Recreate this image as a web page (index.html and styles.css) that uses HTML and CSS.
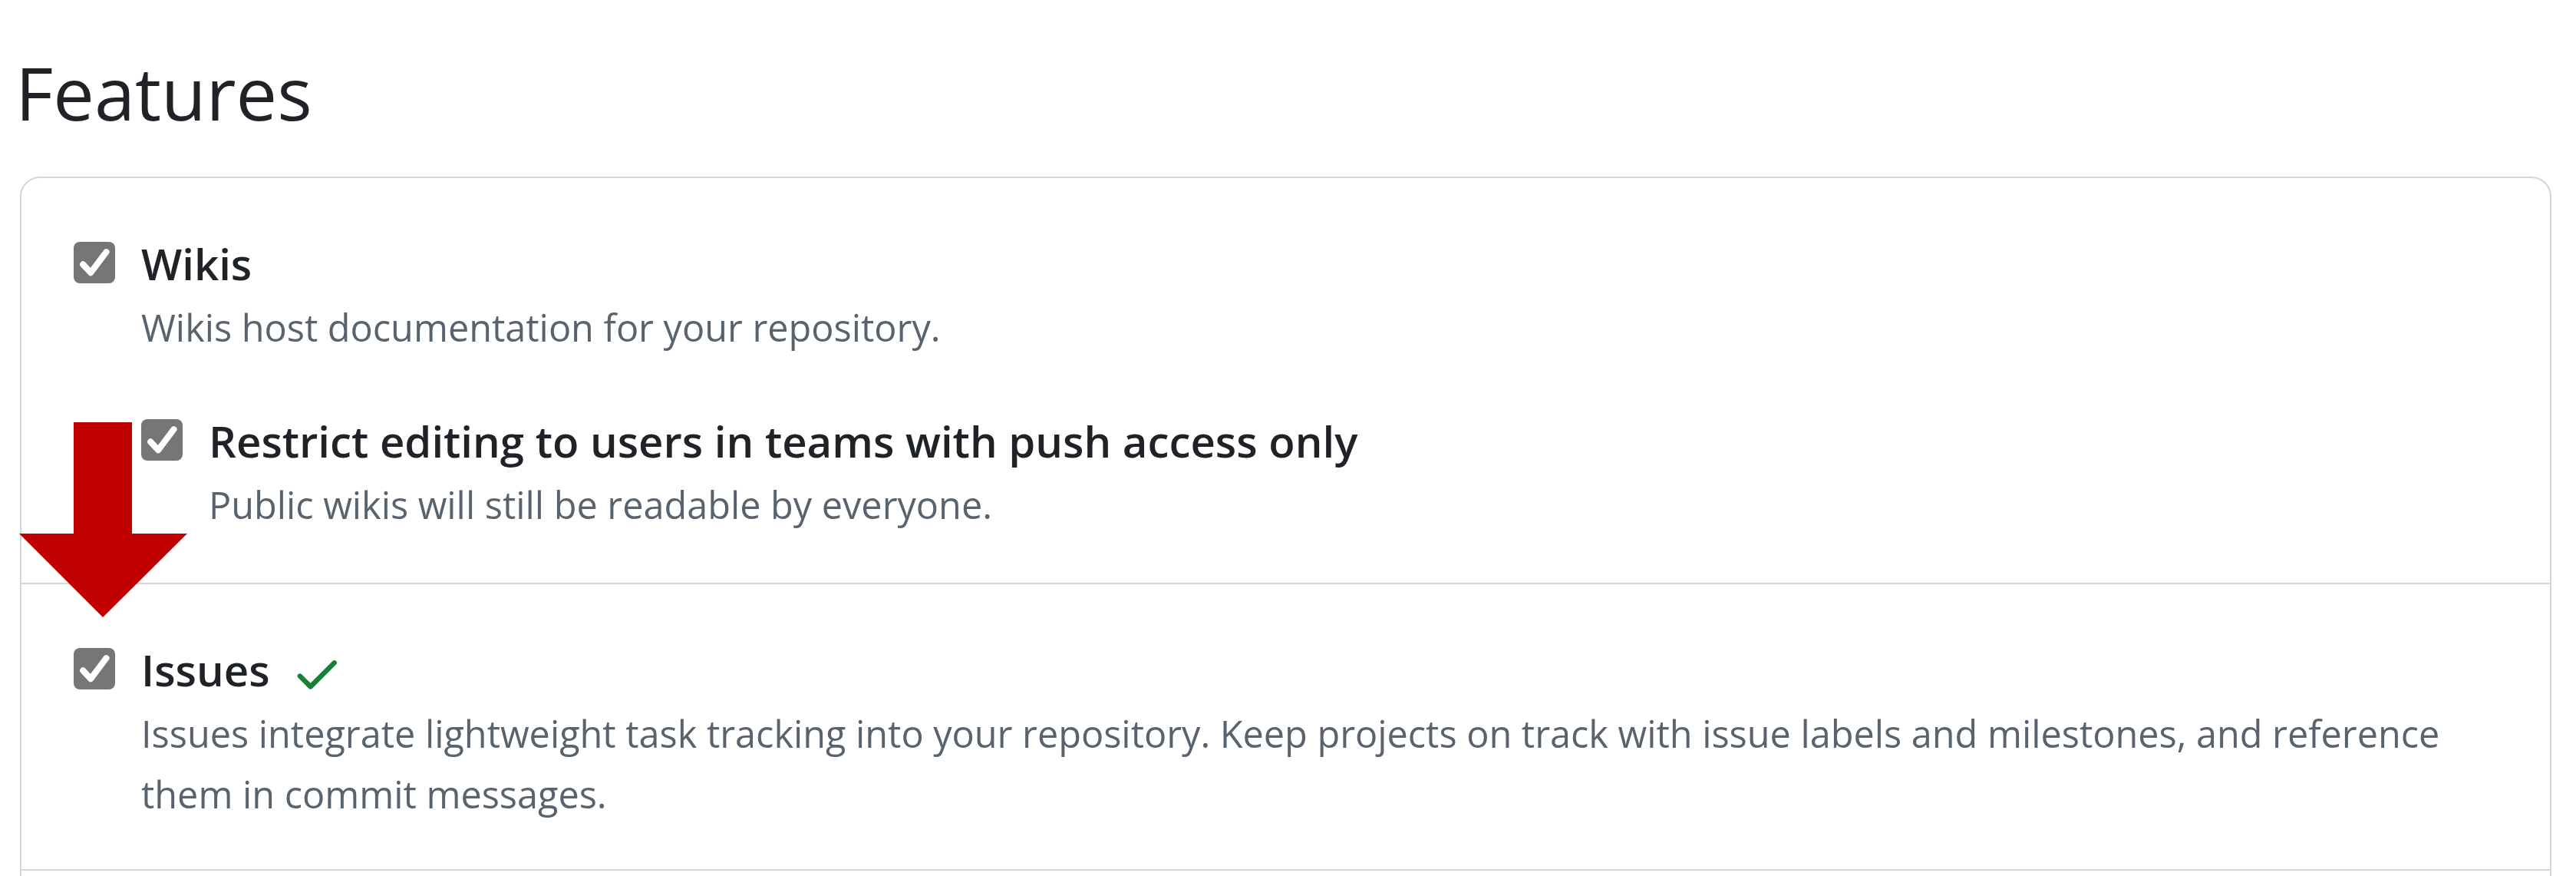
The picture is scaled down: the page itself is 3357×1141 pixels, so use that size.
FILE: index.html
```html
<!DOCTYPE html>
<html lang="en">
<head>
<meta charset="utf-8">
<title>Features</title>
<link rel="stylesheet" href="styles.css">
</head>
<body>
<main class="page">
  <h2 class="heading">Features</h2>
  <div class="box">
    <div class="box-row">
      <div class="check-item">
        <span class="checkbox"><svg viewBox="0 0 16 16"><path d="M3.6 8.7 L6.6 11.9 L12.6 3.9"/></svg></span>
        <div class="check-body">
          <div class="label-line"><label class="check-label">Wikis</label></div>
          <p class="note">Wikis host documentation for your repository.</p>
          <div class="check-item nested">
            <span class="checkbox"><svg viewBox="0 0 16 16"><path d="M3.6 8.7 L6.6 11.9 L12.6 3.9"/></svg></span>
            <div class="check-body">
              <div class="label-line"><label class="check-label">Restrict editing to users in teams with push access only</label></div>
              <p class="note">Public wikis will still be readable by everyone.</p>
            </div>
          </div>
        </div>
      </div>
    </div>
    <div class="box-row">
      <div class="check-item">
        <span class="checkbox"><svg viewBox="0 0 16 16"><path d="M3.6 8.7 L6.6 11.9 L12.6 3.9"/></svg></span>
        <div class="check-body">
          <div class="label-line">
            <label class="check-label">Issues</label>
            <svg class="success" viewBox="0 0 16 16"><path d="M13.78 4.22a.75.75 0 0 1 0 1.06l-7.25 7.25a.75.75 0 0 1-1.06 0L2.22 9.28a.751.751 0 0 1 .018-1.042.751.751 0 0 1 1.042-.018L6 10.94l6.72-6.72a.75.75 0 0 1 1.06 0Z"/></svg>
          </div>
          <p class="note">Issues integrate lightweight task tracking into your repository. Keep projects on track with issue labels and milestones, and reference them in commit messages.</p>
        </div>
      </div>
    </div>
    <div class="box-row box-row-more"></div>
  </div>
  <svg class="arrow" viewBox="0 0 219 254" aria-hidden="true"><polygon points="71,0 147,0 147,145 219,145 109,254 0,145 71,145"/></svg>
</main>
</body>
</html>
```
FILE: styles.css
```css
html, body {
  margin: 0;
  padding: 0;
  background: #ffffff;
}

body {
  font-family: "Open Sans", "Noto Sans", "Liberation Sans", sans-serif;
  color: #1f2328;
}

.page {
  position: relative;
  display: flow-root;
  padding: 0 32px 0 26px;
}

.heading {
  margin: 60px 0 49px -6px;
  font-size: 95.5px;
  line-height: 121px;
  font-weight: 400;
  color: #1f2328;
}

.box {
  border: 2px solid #d0d7de;
  border-radius: 26px;
  background: #ffffff;
}

.box-row {
  padding: 67px 68px 58px 68px;
}

.box-row + .box-row {
  border-top: 2px solid #d0d7de;
}

.box-row-more {
  height: 60px;
  padding: 0;
}

.check-item {
  display: flex;
  align-items: flex-start;
  gap: 34px;
}

.check-item.nested {
  margin-top: 64px;
  margin-bottom: 4px;
}

.checkbox {
  flex: 0 0 54px;
  width: 54px;
  height: 54px;
  margin-top: 16px;
  border-radius: 8px;
  background: #767676;
  display: flex;
  align-items: center;
  justify-content: center;
}

.checkbox svg {
  width: 54px;
  height: 54px;
  fill: none;
  stroke: #ffffff;
  stroke-width: 2.4;
  stroke-linecap: round;
  stroke-linejoin: round;
}

.check-body {
  flex: 1 1 auto;
  min-width: 0;
}

.label-line {
  display: flex;
  align-items: flex-start;
}

.check-label {
  font-size: 56.3px;
  line-height: 88px;
  font-weight: 600;
  color: #1f2328;
}

.success {
  width: 68.5px;
  height: 68.5px;
  margin: 15px 0 0 27px;
  fill: #1a7f37;
}

.note {
  margin: 0;
  font-size: 48.6px;
  line-height: 79px;
  color: #59636e;
}

.arrow {
  position: absolute;
  left: 25px;
  top: 550px;
  width: 219px;
  height: 254px;
  fill: #c00000;
}
```
